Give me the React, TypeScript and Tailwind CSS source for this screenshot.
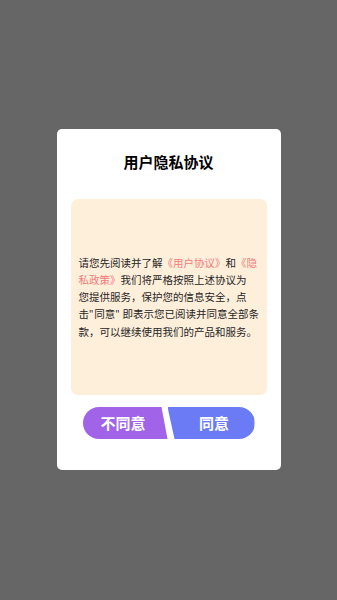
import React from "react";

export default function App() {
  return (
    <div
      className="w-[337px] h-[600px] bg-[#666666] flex items-start justify-center pt-[129px]"
      style={{ fontFamily: '"Noto Sans CJK SC", "Noto Sans", sans-serif' }}
    >
      <div className="w-[224px] h-[341px] bg-white rounded-[5px] flex flex-col items-center">
        <div className="pt-[23px] h-[43px] text-[15px] leading-[20px] font-bold text-black">
          用户隐私协议
        </div>
        <div className="mt-[27px] w-[196px] h-[196px] bg-[#feefdb] rounded-[7px] flex items-center pl-[8px]">
          <p className="text-[10.5px] leading-[17px] text-[#262626] whitespace-nowrap">
            请您先阅读并了解<span className="text-[#f57a7a]">《用户协议》</span>和<span className="text-[#f57a7a]">《隐</span>
            <br />
            <span className="text-[#f57a7a]">私政策》</span>我们将严格按照上述协议为
            <br />
            您提供服务，保护您的信息安全，点
            <br />
            击<span className="font-['Noto_Sans'] mr-[1px]">"</span>同意<span className="font-['Noto_Sans'] mr-[3px]">"</span>即表示您已阅读并同意全部条
            <br />
            款，可以继续使用我们的产品和服务。
          </p>
        </div>
        <div className="mt-[12px] flex">
          <button className="w-[85px] h-[32px] rounded-l-full bg-[#a163e7] text-white text-[15px] font-bold leading-[32px] pr-[4px] [clip-path:polygon(0_0,79px_0,85px_100%,0_100%)]">
            不同意
          </button>
          <button className="w-[87px] h-[32px] rounded-r-full bg-[#6a7bf5] text-white text-[15px] font-bold leading-[32px] pl-[6px] [clip-path:polygon(0_0,100%_0,100%_100%,7px_100%)]">
            同意
          </button>
        </div>
      </div>
    </div>
  );
}
